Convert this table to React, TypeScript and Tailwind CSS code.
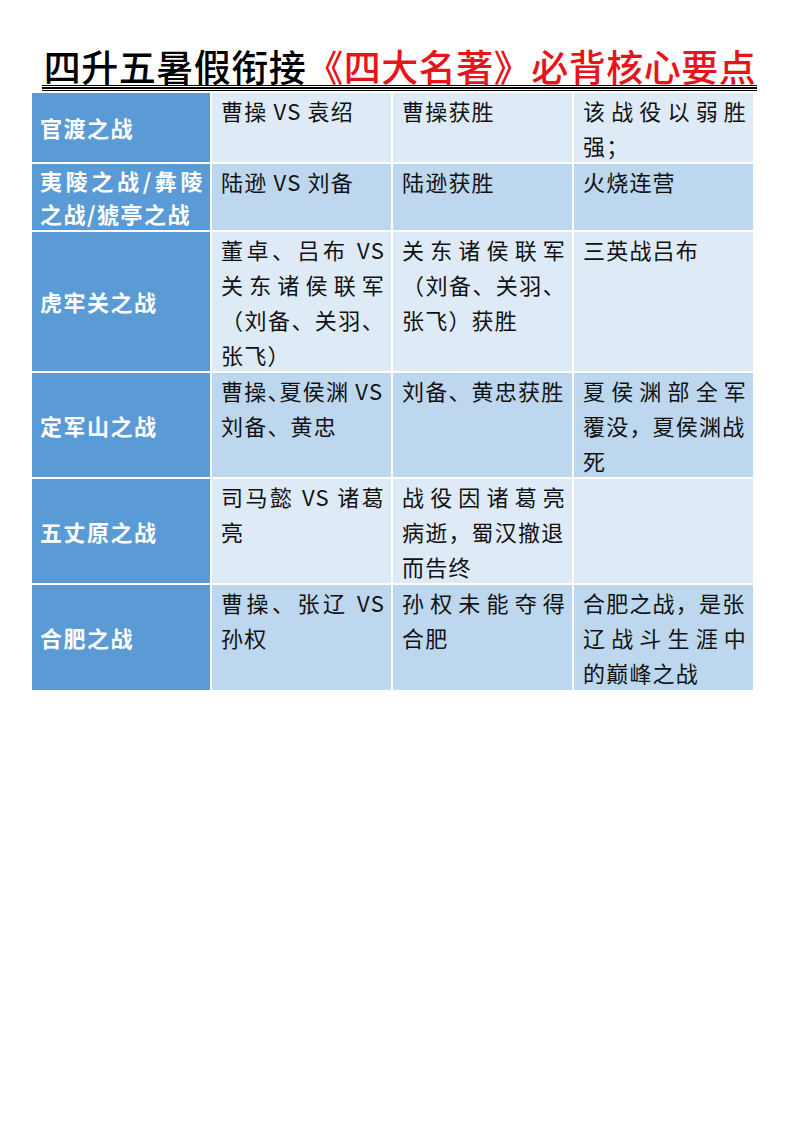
import React from 'react';

type Line = { t: string; j?: boolean; half?: boolean };

interface Row {
  name: Line[];
  cells: Line[][];
  tone: 'light' | 'dark';
}

const J = (t: string): Line => ({ t, j: true });
const N = (t: string): Line => ({ t });

const rows: Row[] = [
  {
    name: [N('官渡之战')],
    cells: [[N('曹操 VS 袁绍')], [N('曹操获胜')], [J('该战役以弱胜'), N('强；')]],
    tone: 'light',
  },
  {
    name: [J('夷陵之战/彝陵'), N('之战/猇亭之战')],
    cells: [[N('陆逊 VS 刘备')], [N('陆逊获胜')], [N('火烧连营')]],
    tone: 'dark',
  },
  {
    name: [N('虎牢关之战')],
    cells: [
      [J('董卓、吕布 VS'), J('关东诸侯联军'), J('（刘备、关羽、'), N('张飞）')],
      [J('关东诸侯联军'), J('（刘备、关羽、'), N('张飞）获胜')],
      [N('三英战吕布')],
    ],
    tone: 'light',
  },
  {
    name: [N('定军山之战')],
    cells: [
      [{ t: '曹操、夏侯渊 VS', half: true }, N('刘备、黄忠')],
      [N('刘备、黄忠获胜')],
      [J('夏侯渊部全军'), N('覆没，夏侯渊战'), N('死')],
    ],
    tone: 'dark',
  },
  {
    name: [N('五丈原之战')],
    cells: [
      [J('司马懿 VS 诸葛'), N('亮')],
      [J('战役因诸葛亮'), N('病逝，蜀汉撤退'), N('而告终')],
      [],
    ],
    tone: 'light',
  },
  {
    name: [N('合肥之战')],
    cells: [
      [J('曹操、张辽 VS'), N('孙权')],
      [J('孙权未能夺得'), N('合肥')],
      [N('合肥之战，是张'), J('辽战斗生涯中'), N('的巅峰之战')],
    ],
    tone: 'dark',
  },
];

const TextLine: React.FC<{ line: Line }> = ({ line }) => (
  <div
    className={
      'whitespace-nowrap ' +
      (line.j ? 'text-justify [text-align-last:justify]' : 'text-left') +
      (line.half ? ' [font-feature-settings:"halt"]' : '')
    }
  >
    {line.t}
  </div>
);

export default function App() {
  return (
    <div className="w-[800px] h-[1132px] bg-white font-['Noto_Sans_CJK_SC',sans-serif]">
      <h1 className="pt-[47px] text-center text-[37px] leading-[38px] font-medium tracking-[0.5px] text-black">
        四升五暑假衔接<span className="text-[#e8141c]">《四大名著》必背核心要点</span>
      </h1>

      <div className="ml-[42px] w-[715px] flex flex-col gap-[1px]">
        <div className="h-[1px] bg-black" />
        <div className="h-[2px] bg-black" />
        <div className="h-[1px] bg-black" />
      </div>

      <div className="ml-[32px] mt-[2px] w-[721px] grid grid-cols-[178px_179px_179px_179px] gap-[2px] bg-white">
        {rows.map((row, i) => {
          const bg = row.tone === 'light' ? 'bg-[#deebf7]' : 'bg-[#bdd7ee]';
          return (
            <React.Fragment key={i}>
              <div className="bg-[#5b9bd5] flex flex-col justify-center pl-[8px] pr-[6px] text-white font-bold text-[22px] leading-[33px] tracking-[1.5px]">
                {row.name.map((l, k) => (
                  <TextLine key={k} line={l} />
                ))}
              </div>
              {row.cells.map((cell, c) => (
                <div
                  key={c}
                  className={`${bg} pl-[9px] pr-[6px] text-[22px] leading-[34.7px] text-[#111] tracking-[1.2px]`}
                >
                  {cell.map((l, k) => (
                    <TextLine key={k} line={l} />
                  ))}
                </div>
              ))}
            </React.Fragment>
          );
        })}
      </div>
    </div>
  );
}
